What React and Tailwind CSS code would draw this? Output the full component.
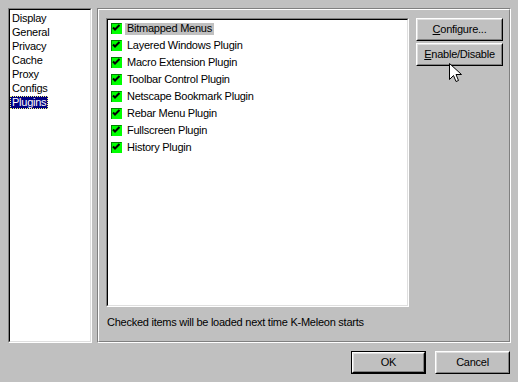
import React from "react";

const plugins = [
  "Bitmapped Menus",
  "Layered Windows Plugin",
  "Macro Extension Plugin",
  "Toolbar Control Plugin",
  "Netscape Bookmark Plugin",
  "Rebar Menu Plugin",
  "Fullscreen Plugin",
  "History Plugin",
];

const pages = ["Display", "General", "Privacy", "Cache", "Proxy", "Configs", "Plugins"];

const Sunken = ({ className = "", children }) => (
  <div className={`border border-t-[#808080] border-l-[#808080] border-r-white border-b-white ${className}`}>
    <div className="h-full w-full border border-t-black border-l-black border-r-[#dfdfdf] border-b-[#dfdfdf] bg-white">
      {children}
    </div>
  </div>
);

const Button = ({ children, isDefault, className = "" }) => (
  <div className={`${isDefault ? "border border-black" : ""} ${className}`}>
    <div className="h-full w-full border border-t-white border-l-white border-r-black border-b-black">
      <div className="h-full w-full flex items-center justify-center border border-t-[#dfdfdf] border-l-[#dfdfdf] border-r-[#808080] border-b-[#808080] text-[11px] text-black">
        {children}
      </div>
    </div>
  </div>
);

const CheckBox = () => (
  <svg width="11" height="11" viewBox="0 0 11 11" className="shrink-0">
    <rect x="0" y="0" width="11" height="11" fill="#00ff00" />
    <path d="M0 0.5H10.5M0.5 0V11" stroke="#008000" strokeWidth="1" />
    <path d="M2 4.5L4 6.5L8.5 2" stroke="#000" strokeWidth="2" fill="none" />
  </svg>
);

const Cursor = () => (
  <svg width="13" height="20" viewBox="0 0 13 20" className="absolute left-[449px] top-[63px]">
    <path
      d="M0.5 0.5V16.5L4.5 12.5L7 18.5L9.5 17.5L7 11.5H12.5Z"
      fill="#fff"
      stroke="#000"
      strokeWidth="1"
      strokeLinejoin="miter"
    />
  </svg>
);

export default function App() {
  return (
    <div className="relative w-[518px] h-[382px] bg-[#c0c0c0] font-['Liberation_Sans',Arial,sans-serif] text-[11px] tracking-[-0.25px] text-black leading-none select-none overflow-hidden">
      <div className="flex pt-[8px] pl-[8px] gap-[5px]">
        <Sunken className="w-[84px] h-[335px]">
          <ul className="pt-[1px]">
            {pages.map((p) => (
              <li key={p} className="h-[14px] flex items-center">
                {p === "Plugins" ? (
                  <span className="h-[13px] flex items-center px-[2px] bg-[#000080] text-white outline outline-1 outline-dotted outline-[#ffff80] -outline-offset-1">
                    {p}
                  </span>
                ) : (
                  <span className="px-[2px]">{p}</span>
                )}
              </li>
            ))}
          </ul>
        </Sunken>

        <div className="w-[414px] h-[335px] border border-t-[#808080] border-l-[#808080] border-r-white border-b-white">
          <div className="h-full w-full border border-t-white border-l-white border-r-[#808080] border-b-[#808080] pl-[7px] pt-[8px]">
            <div className="flex gap-[7px]">
              <Sunken className="w-[303px] h-[289px]">
                <ul className="pl-[3px]">
                  {plugins.map((p, i) => (
                    <li key={p} className="h-[17px] flex items-center">
                      <CheckBox />
                      <span
                        className={`ml-[3px] h-[12px] px-[2px] flex items-center ${
                          i === 0 ? "bg-[#c0c0c0]" : ""
                        }`}
                      >
                        {p}
                      </span>
                    </li>
                  ))}
                </ul>
              </Sunken>
              <div className="flex flex-col gap-[2px]">
                <Button className="w-[87px] h-[23px]">
                  <span>
                    <span className="underline">C</span>onfigure...
                  </span>
                </Button>
                <Button className="w-[87px] h-[23px]">
                  <span>
                    <span className="underline">E</span>nable/Disable
                  </span>
                </Button>
              </div>
            </div>
            <p className="mt-[10px] pl-[1px]">Checked items will be loaded next time K-Meleon starts</p>
          </div>
        </div>
      </div>

      <div className="flex justify-end gap-[9px] pr-[8px] mt-[8px]">
        <Button isDefault className="w-[75px] h-[23px]">OK</Button>
        <Button className="w-[75px] h-[23px]">Cancel</Button>
      </div>

      <Cursor />
    </div>
  );
}
